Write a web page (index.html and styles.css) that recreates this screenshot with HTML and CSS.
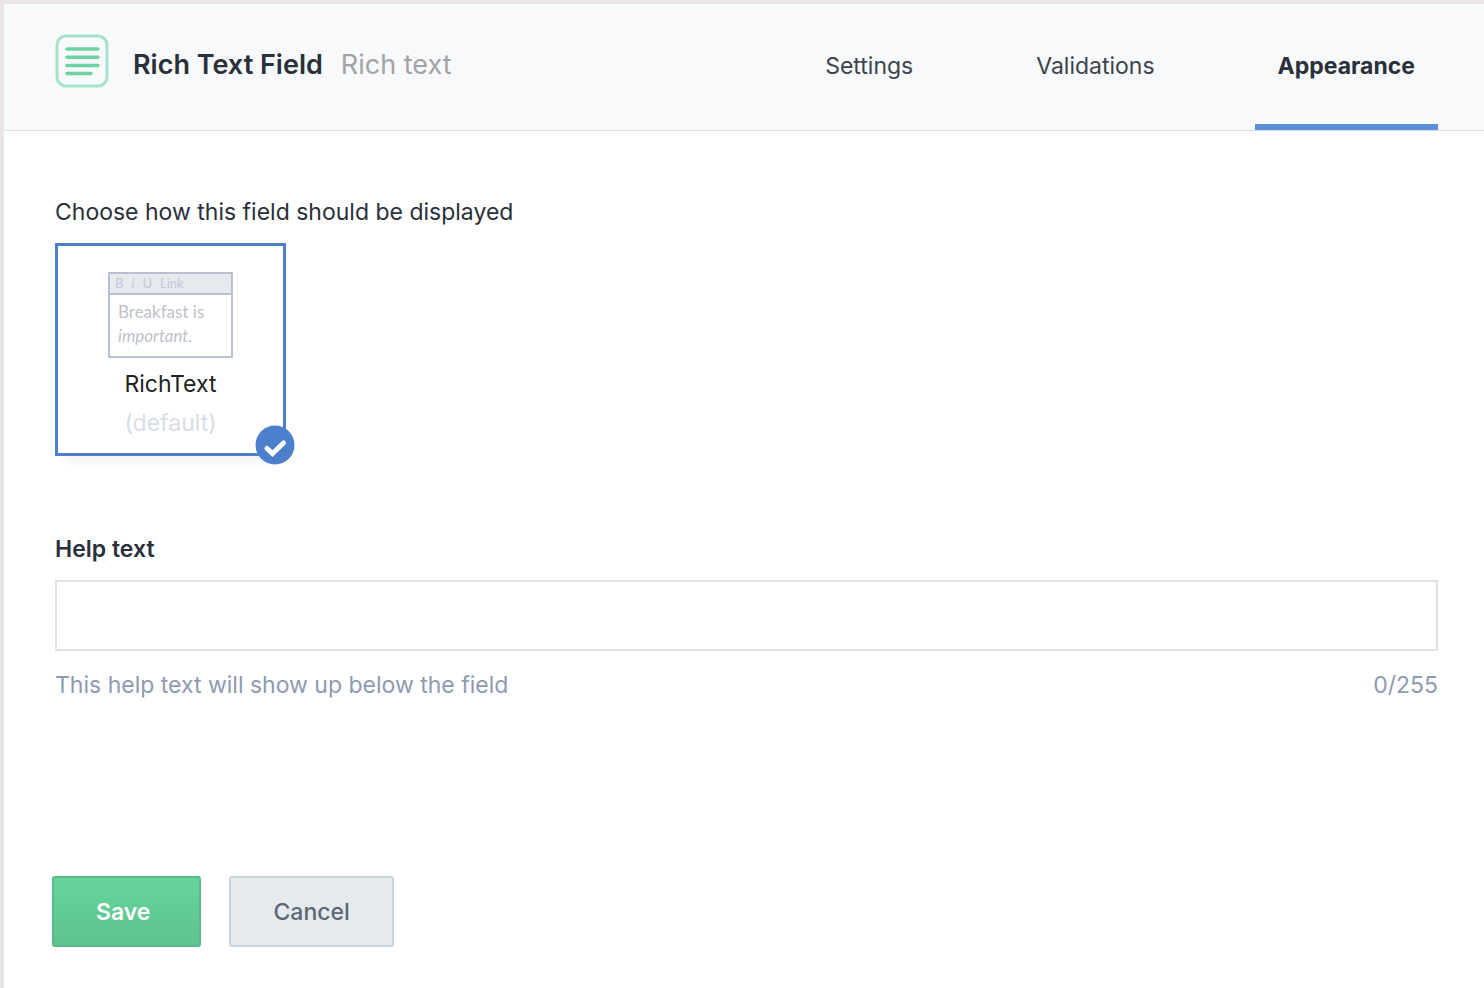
FILE: index.html
```html
<!DOCTYPE html>
<html lang="en">
<head>
	<meta charset="UTF-8">
	<meta name="viewport" content="width=device-width, initial-scale=1.0">
	<title>Rich Text Field</title>
	<link rel="stylesheet" href="styles.css">
</head>
<body>
	<header class="header">
		<svg class="header-icon" width="54" height="54" viewBox="0 0 54 54" fill="none" stroke-linecap="round" aria-hidden="true">
			<rect x="2" y="2" width="50" height="50" rx="9" stroke="#a3e4c8" stroke-width="3"/>
			<path d="M12 15h31M12 23.300h31M12 31.500h31M12 39.500h24" stroke="#6dd3a3" stroke-width="3.500"/>
		</svg>
		<h1 class="title">Rich Text Field</h1>
		<span class="type">Rich text</span>
		<nav class="tabs">
			<a class="tab" href="#settings">Settings</a>
			<a class="tab" href="#validations">Validations</a>
			<a class="tab active" href="#appearance">Appearance</a>
		</nav>
	</header>

	<form class="content">
		<fieldset class="widgets">
			<legend>Choose how this field should be displayed</legend>
			<label class="widget">
				<input class="widget-radio" type="radio" name="widget" value="richtext" checked>
				<span class="preview" aria-hidden="true">
					<span class="preview-bar"><span>B</span><i>i</i><span>U</span><span>Link</span></span>
					<span class="preview-text">Breakfast is<br><i>important.</i></span>
				</span>
				<span class="widget-name">RichText</span>
				<span class="widget-default">(default)</span>
				<svg class="check" width="40" height="40" viewBox="0 0 40 40" aria-hidden="true">
					<circle cx="20" cy="20" r="19.500" fill="#4c80cc"/>
					<path d="M12 23.500l5.500 5L28.500 18" fill="none" stroke="#fff" stroke-width="5" stroke-linecap="round"/>
				</svg>
			</label>
		</fieldset>

		<label class="help-label" for="help">Help text</label>
		<input class="help-input" id="help" type="text" maxlength="255">
		<div class="hint">
			<span>This help text will show up below the field</span>
			<span>0/255</span>
		</div>

		<div class="buttons">
			<button class="button save" type="submit">Save</button>
			<button class="button cancel" type="button">Cancel</button>
		</div>
	</form>
</body>
</html>
```
FILE: styles.css
```css
* {
	box-sizing: border-box;
}
body {
	margin: 0;
	min-height: 100vh;
	border-top: 4px solid #e9e5e4;
	border-left: 4px solid #e9e5e4;
	background-color: #fff;
	color: #2a3039;
	font-family: Inter, "Liberation Sans", sans-serif;
	font-size: 23px;
	line-height: 32px;
}

.header {
	display: flex;
	padding: 0 46px 0 51px;
	background-color: #f7f9fb;
	border-bottom: 1px solid #d9dfe8;
}
.header-icon {
	margin-top: 30px;
}
.title, .type {
	margin: 45px 0 0 24px;
	font-size: 27px;
	font-weight: 600;
}
.type {
	margin-left: 18px;
	color: #a3a3a3;
	font-weight: 400;
}
.tabs {
	display: flex;
	gap: 77px;
	margin-left: auto;
}
.tab {
	padding: 46px 23px 42px;
	border-bottom: 6px solid transparent;
	color: #3c434d;
	text-decoration: none;
}
.tab.active {
	border-color: #5b8fdc;
	color: #2a3039;
	font-weight: 700;
}

.content {
	padding: 65px 46px 40px 51px;
}
.widgets {
	margin: 0 0 77px;
	padding: 0;
	border: 0;
}
.widgets legend {
	padding: 0 0 15px;
}
.widget {
	position: relative;
	display: flex;
	flex-direction: column;
	align-items: center;
	width: 231px;
	padding: 26px 0 14px;
	border: 3px solid #4c80cc;
	box-shadow: 0 16px 10px -10px #f4f4f7;
	color: #222;
}
.widget-radio {
	position: absolute;
	opacity: 0;
}
.preview {
	width: 125px;
	border: 2px solid #b9c0d2;
	color: #bdc1c9;
	font-family: Lato, sans-serif;
}
.preview-bar {
	display: flex;
	gap: 8px;
	padding: 0 5px;
	border-bottom: 2px solid #b9c0d2;
	background-color: #e6e9ee;
	color: #c3c8d8;
	font-size: 13px;
	line-height: 19px;
}
.preview-text {
	display: block;
	padding: 5px 8px 8px;
	font-size: 17px;
	line-height: 24px;
}
.widget-name {
	margin-top: 10px;
}
.widget-default {
	margin-top: 7px;
	color: #d8dde5;
}
.check {
	position: absolute;
	right: -12px;
	bottom: -12px;
}

.help-label {
	display: block;
	margin-bottom: 15px;
	font-weight: 600;
}
.help-input {
	display: block;
	width: 100%;
	height: 71px;
	padding: 0 20px;
	border: 2px solid #dce3e7;
	font: inherit;
}
.hint {
	display: flex;
	justify-content: space-between;
	margin-top: 18px;
	color: #8d9bb0;
}

.buttons {
	display: flex;
	gap: 28px;
	margin: 175px 0 0 -3px;
}
.button {
	height: 71px;
	padding: 0 42px;
	border: 2px solid #cbd4d9;
	border-radius: 3px;
	background-color: #e5eaed;
	color: #5c6675;
	font: inherit;
	font-weight: 500;
}
.save {
	padding-right: 49px;
	border-color: #58ba87;
	background: linear-gradient(#65d59b, #5dc38f);
	color: #fff;
	font-weight: 600;
}
```
